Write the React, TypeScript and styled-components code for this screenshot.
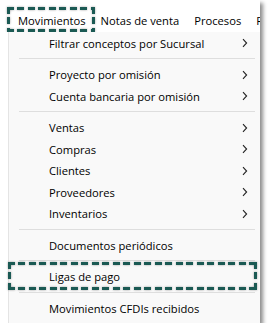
import React from "react";
import styled, { createGlobalStyle } from "styled-components";

const Global = createGlobalStyle`
  html, body { margin: 0; padding: 0; background: #ffffff; }
  body { font-family: "Open Sans", "Noto Sans", sans-serif; }
`;

const Frame = styled.div`
  position: relative;
  width: 260px;
  height: 323px;
  background: #ffffff;
  overflow: hidden;
  box-shadow: 3px 3px 4px rgba(0, 0, 0, 0.45);
  display: flex;
  flex-direction: column;
`;

const MenuBar = styled.div`
  display: flex;
  align-items: center;
  height: 24px;
  padding: 8px 0 0 10.5px;
  white-space: nowrap;
  flex: none;
  overflow: hidden;
`;

const BarItem = styled.div`
  position: relative;
  padding: 0 7.5px;
  height: 24px;
  display: flex;
  align-items: center;
  font-size: 11.2px;
  color: #000;
`;

const Dashed = styled.span<{ $t: number; $r: number; $b: number; $l: number }>`
  position: absolute;
  top: ${(p) => p.$t}px;
  right: ${(p) => p.$r}px;
  bottom: ${(p) => p.$b}px;
  left: ${(p) => p.$l}px;
  pointer-events: none;
  filter: drop-shadow(0.5px 0.8px 0.8px rgba(0, 0, 0, 0.35));
  background:
    repeating-linear-gradient(90deg, #1b5a54 0 7px, transparent 7px 10.5px) top left / 100% 3px no-repeat,
    repeating-linear-gradient(90deg, #1b5a54 0 7px, transparent 7px 10.5px) bottom left / 100% 3px no-repeat,
    repeating-linear-gradient(180deg, #1b5a54 0 7px, transparent 7px 10.5px) top left / 3px 100% no-repeat,
    repeating-linear-gradient(180deg, #1b5a54 0 7px, transparent 7px 10.5px) top right / 3px 100% no-repeat;
`;

const Panel = styled.div`
  flex: 1;
  margin-left: 8px;
  background: #f9f9f9;
  border-left: 1px solid #e4e4e4;
  padding-top: 0.25px;
  display: flex;
  flex-direction: column;
`;

const Row = styled.div`
  position: relative;
  height: 21.5px;
  display: flex;
  align-items: center;
  padding-left: 40px;
  padding-right: 12px;
  font-size: 11.2px;
  color: #000;
  white-space: nowrap;
`;

const Label = styled.span`
  flex: 1;
`;

const Sep = styled.div`
  height: 10px;
  display: flex;
  align-items: center;
  padding: 0 5px 0 10px;
  &::before {
    content: "";
    flex: 1;
    height: 1px;
    background: #dedede;
  }
`;

const Chevron = () => (
  <svg width="6" height="10" viewBox="0 0 6 10" style={{ display: "block" }}>
    <path d="M1 1.2 L4.6 5 L1 8.8" fill="none" stroke="#222" strokeWidth="1.1" />
  </svg>
);

type Item = { label: string; sub?: boolean; hl?: boolean } | "sep";

const items: Item[] = [
  { label: "Filtrar conceptos por Sucursal", sub: true },
  "sep",
  { label: "Proyecto por omisión", sub: true },
  { label: "Cuenta bancaria por omisión", sub: true },
  "sep",
  { label: "Ventas", sub: true },
  { label: "Compras", sub: true },
  { label: "Clientes", sub: true },
  { label: "Proveedores", sub: true },
  { label: "Inventarios", sub: true },
  "sep",
  { label: "Documentos periódicos" },
  "sep",
  { label: "Ligas de pago", hl: true },
  "sep",
  { label: "Movimientos CFDIs recibidos" },
];

export default function App() {
  return (
    <>
      <Global />
      <Frame>
        <MenuBar>
          <BarItem>
            Movimientos
            <Dashed $t={-1} $r={-1.5} $b={0} $l={-3.5} />
          </BarItem>
          <BarItem>Notas de venta</BarItem>
          <BarItem>Procesos</BarItem>
          <BarItem>Reportes</BarItem>
        </MenuBar>
        <Panel>
          {items.map((it, i) =>
            it === "sep" ? (
              <Sep key={i} />
            ) : (
              <Row key={i}>
                <Label>{it.label}</Label>
                {it.sub && <Chevron />}
                {it.hl && <Dashed $t={-4} $r={3} $b={-3} $l={-1} />}
              </Row>
            )
          )}
        </Panel>
      </Frame>
    </>
  );
}
